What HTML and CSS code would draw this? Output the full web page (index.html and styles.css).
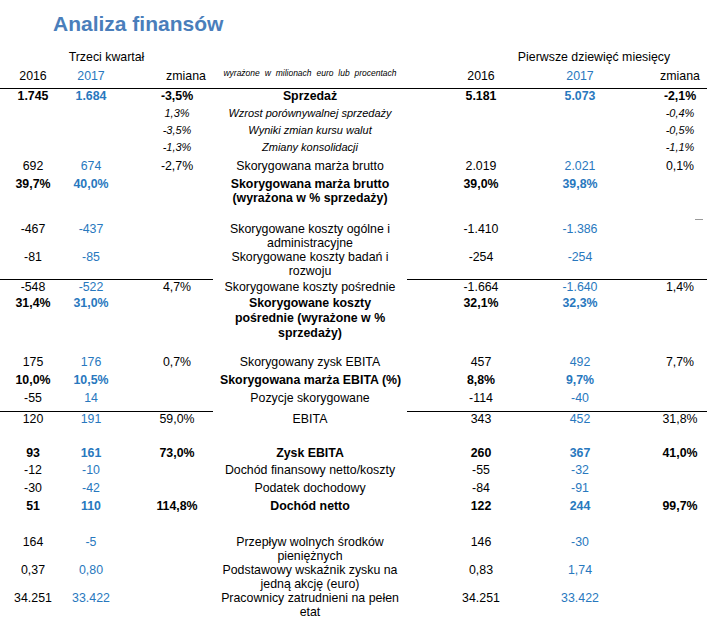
FILE: index.html
```html
<!DOCTYPE html>
<html lang="pl">
<head>
<meta charset="utf-8">
<title>Analiza finansów</title>
<link rel="stylesheet" href="styles.css">
</head>
<body>
<div class="sheet">
  <h1 class="title">Analiza finansów</h1>

  <div class="hrow h1row">
    <div class="span3">Trzeci kwartał</div>
    <div class="lab"></div>
    <div class="span3r">Pierwsze dziewięć miesięcy</div>
  </div>

  <div class="hrow h2row">
    <div class="c">2016</div>
    <div class="c blue">2017</div>
    <div class="c3 zh">zmiana</div>
    <div class="lab unit">wyrażone w milionach euro lub procentach</div>
    <div class="c">2016</div>
    <div class="c blue">2017</div>
    <div class="c7">zmiana</div>
  </div>

  <div class="row first bold h16">
    <div class="c">1.745</div><div class="c blue">1.684</div><div class="c3">-3,5%</div>
    <div class="lab">Sprzedaż</div>
    <div class="c">5.181</div><div class="c blue">5.073</div><div class="c7">-2,1%</div>
  </div>
  <div class="row it h17">
    <div class="c"></div><div class="c"></div><div class="c3">1,3%</div>
    <div class="lab">Wzrost porównywalnej sprzedaży</div>
    <div class="c"></div><div class="c"></div><div class="c7">-0,4%</div>
  </div>
  <div class="row it h17">
    <div class="c"></div><div class="c"></div><div class="c3">-3,5%</div>
    <div class="lab">Wyniki zmian kursu walut</div>
    <div class="c"></div><div class="c"></div><div class="c7">-0,5%</div>
  </div>
  <div class="row it h19">
    <div class="c"></div><div class="c"></div><div class="c3">-1,3%</div>
    <div class="lab">Zmiany konsolidacji</div>
    <div class="c"></div><div class="c"></div><div class="c7">-1,1%</div>
  </div>
  <div class="row h18">
    <div class="c">692</div><div class="c blue">674</div><div class="c3">-2,7%</div>
    <div class="lab">Skorygowana marża brutto</div>
    <div class="c">2.019</div><div class="c blue">2.021</div><div class="c7">0,1%</div>
  </div>
  <div class="row bold h45">
    <div class="c">39,7%</div><div class="c blue">40,0%</div><div class="c3"></div>
    <div class="lab tight">Skorygowana marża brutto<br>(wyrażona w % sprzedaży)</div>
    <div class="c">39,0%</div><div class="c blue">39,8%</div><div class="c7"><div class="dash"></div></div>
  </div>
  <div class="row h28">
    <div class="c">-467</div><div class="c blue">-437</div><div class="c3"></div>
    <div class="lab tight">Skorygowane koszty ogólne i<br>administracyjne</div>
    <div class="c">-1.410</div><div class="c blue">-1.386</div><div class="c7"></div>
  </div>
  <div class="row h30">
    <div class="c">-81</div><div class="c blue">-85</div><div class="c3"></div>
    <div class="lab tight">Skorygowane koszty badań i<br>rozwoju</div>
    <div class="c">-254</div><div class="c blue">-254</div><div class="c7"></div>
  </div>
  <div class="row rule h16">
    <div class="c">-548</div><div class="c blue">-522</div><div class="c3">4,7%</div>
    <div class="lab">Skorygowane koszty pośrednie</div>
    <div class="c">-1.664</div><div class="c blue">-1.640</div><div class="c7">1,4%</div>
  </div>
  <div class="row bold h59">
    <div class="c">31,4%</div><div class="c blue">31,0%</div><div class="c3"></div>
    <div class="lab">Skorygowane koszty<br>pośrednie (wyrażone w %<br>sprzedaży)</div>
    <div class="c">32,1%</div><div class="c blue">32,3%</div><div class="c7"></div>
  </div>
  <div class="row h18">
    <div class="c">175</div><div class="c blue">176</div><div class="c3">0,7%</div>
    <div class="lab">Skorygowany zysk EBITA</div>
    <div class="c">457</div><div class="c blue">492</div><div class="c7">7,7%</div>
  </div>
  <div class="row bold h18">
    <div class="c">10,0%</div><div class="c blue">10,5%</div><div class="c3"></div>
    <div class="lab">Skorygowana marża EBITA (%)</div>
    <div class="c">8,8%</div><div class="c blue">9,7%</div><div class="c7"></div>
  </div>
  <div class="row h21">
    <div class="c">-55</div><div class="c blue">14</div><div class="c3"></div>
    <div class="lab">Pozycje skorygowane</div>
    <div class="c">-114</div><div class="c blue">-40</div><div class="c7"></div>
  </div>
  <div class="row rule h34">
    <div class="c">120</div><div class="c blue">191</div><div class="c3">59,0%</div>
    <div class="lab">EBITA</div>
    <div class="c">343</div><div class="c blue">452</div><div class="c7">31,8%</div>
  </div>
  <div class="row bold h17">
    <div class="c">93</div><div class="c blue">161</div><div class="c3">73,0%</div>
    <div class="lab">Zysk EBITA</div>
    <div class="c">260</div><div class="c blue">367</div><div class="c7">41,0%</div>
  </div>
  <div class="row h18">
    <div class="c">-12</div><div class="c blue">-10</div><div class="c3"></div>
    <div class="lab">Dochód finansowy netto/koszty</div>
    <div class="c">-55</div><div class="c blue">-32</div><div class="c7"></div>
  </div>
  <div class="row h18">
    <div class="c">-30</div><div class="c blue">-42</div><div class="c3"></div>
    <div class="lab">Podatek dochodowy</div>
    <div class="c">-84</div><div class="c blue">-91</div><div class="c7"></div>
  </div>
  <div class="row bold h36">
    <div class="c">51</div><div class="c blue">110</div><div class="c3">114,8%</div>
    <div class="lab">Dochód netto</div>
    <div class="c">122</div><div class="c blue">244</div><div class="c7">99,7%</div>
  </div>
  <div class="row h28">
    <div class="c">164</div><div class="c blue">-5</div><div class="c3"></div>
    <div class="lab tight">Przepływ wolnych środków<br>pieniężnych</div>
    <div class="c">146</div><div class="c blue">-30</div><div class="c7"></div>
  </div>
  <div class="row h28">
    <div class="c">0,37</div><div class="c blue">0,80</div><div class="c3"></div>
    <div class="lab tight">Podstawowy wskaźnik zysku na<br>jedną akcję (euro)</div>
    <div class="c">0,83</div><div class="c blue">1,74</div><div class="c7"></div>
  </div>
  <div class="row h30">
    <div class="c">34.251</div><div class="c blue">33.422</div><div class="c3"></div>
    <div class="lab tight">Pracownicy zatrudnieni na pełen<br>etat</div>
    <div class="c">34.251</div><div class="c blue">33.422</div><div class="c7"></div>
  </div>
</div>
</body>
</html>
```

FILE: styles.css
```css
html, body {
  margin: 0;
  padding: 0;
  background: #ffffff;
}

.sheet {
  width: 707px;
  font-family: "Liberation Sans", Arial, sans-serif;
  font-size: 12.35px;
  line-height: 15px;
  color: #000000;
}

.title {
  margin: 0;
  height: 49px;
  box-sizing: border-box;
  padding: 12px 0 0 53px;
  font-size: 21px;
  line-height: 24px;
  font-weight: bold;
  color: #4a7ebb;
}

.hrow,
.row {
  display: grid;
  grid-template-columns: 66px 50px 97px 194px 148px 50px 102px;
  box-sizing: border-box;
}

.h1row {
  height: 18px;
  grid-template-columns: 213px 194px 300px;
}

.h1row > div {
  padding-top: 1px;
  text-align: center;
}

.span3r {
  padding-left: 74px;
}

.h2row {
  height: 22px;
  border-bottom: 1px solid #000000;
}

.h2row > div {
  padding-top: 2px;
}

.c,
.c3,
.c7,
.lab {
  text-align: center;
  padding-top: 1px;
  white-space: nowrap;
}

.c3 {
  padding-left: 25px;
}

.c3.zh {
  padding-left: 43px;
}

.c7 {
  padding-left: 48px;
}

.lab {
  padding-left: 7px;
  padding-right: 7px;
}

.lab.tight {
  line-height: 14px;
  padding-top: 1px;
}

.h2row > .unit {
  padding-top: 0;
  font-size: 8.5px;
  line-height: 12px;
  font-style: italic;
  word-spacing: 2.5px;
}

.blue {
  color: #2878be;
}

.bold {
  font-weight: bold;
}

.it > .c3,
.it > .c7,
.it > .lab {
  font-style: italic;
  font-size: 11px;
}

.first > div {
  padding-top: 0;
}

.rule > .c,
.rule > .c3,
.rule > .c7 {
  border-top: 1px solid #000000;
  padding-top: 0;
}

.dash {
  width: 8px;
  height: 1px;
  margin: 42px 4px 0 auto;
  background: #9a9a9a;
}

.h16 { height: 16px; }
.h17 { height: 17px; }
.h18 { height: 18px; }
.h19 { height: 19px; }
.h21 { height: 21px; }
.h28 { height: 28px; }
.h30 { height: 30px; }
.h34 { height: 34px; }
.h36 { height: 36px; }
.h45 { height: 45px; }
.h59 { height: 59px; }
```
